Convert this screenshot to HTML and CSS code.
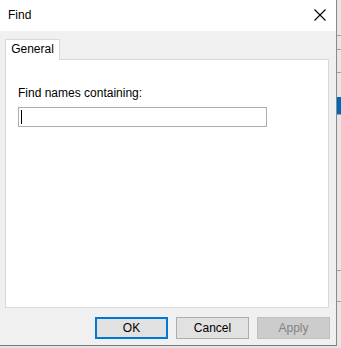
FILE: index.html
```html
<!DOCTYPE html>
<html>

<head>
  <title>Find</title>
  <link rel="stylesheet" href="styles.css">
</head>

<body>
  <div class="screen">
    <div class="dialog">
      <div class="titlebar">
        <span class="title">Find</span>
        <span class="close">
          <svg width="12" height="12" viewBox="0 0 12 12">
            <path d="M0.5 0.5 L11.5 11.5 M11.5 0.5 L0.5 11.5" stroke="#000" stroke-width="1.1" fill="none"/>
          </svg>
        </span>
      </div>
      <div class="body">
        <div class="tabs">
          <div class="tab">General</div>
        </div>
        <div class="panel">
          <label class="label">Find names containing:</label>
          <div class="field"><span class="caret"></span></div>
        </div>
        <div class="buttons">
          <button class="btn btn-default">OK</button>
          <button class="btn">Cancel</button>
          <button class="btn btn-disabled">Apply</button>
        </div>
      </div>
    </div>
    <div class="behind">
      <div class="rule r1"></div>
      <div class="rule r2"></div>
      <div class="rule r3"></div>
      <div class="band"></div>
      <div class="rule r4"></div>
      <div class="rule r5"></div>
      <div class="rule r6"></div>
    </div>
  </div>
</body>

</html>
```

FILE: styles.css
```css
body {
  margin: 0;
  font-family: "Liberation Sans", "Noto Sans", sans-serif;
  font-size: 12px;
  color: #000;
  background: #e3e3e3;
}

.screen {
  display: flex;
  width: 341px;
  height: 348px;
  overflow: hidden;
}

.dialog {
  width: 337px;
  height: 346px;
  flex: none;
  background: #f0f0f0;
  border-right: 1px solid #8a8a8a;
  border-bottom: 1px solid #7a7a7a;
  box-sizing: border-box;
  display: flex;
  flex-direction: column;
}

.titlebar {
  height: 31px;
  background: #fff;
  display: flex;
  align-items: center;
  justify-content: space-between;
  padding: 0 8px 0 8px;
}

.title {
  font-size: 12px;
  margin-top: -1px;
}

.close {
  display: flex;
  margin-right: 2px;
  margin-top: -1px;
}

.body {
  padding: 8px 6px 0 5px;
  display: flex;
  flex-direction: column;
}

.tabs {
  display: flex;
  height: 20px;
}

.tab {
  width: 55px;
  height: 21px;
  box-sizing: border-box;
  background: #fff;
  border: 1px solid #d9d9d9;
  border-bottom: none;
  text-align: center;
  line-height: 19px;
  position: relative;
  z-index: 1;
}

.panel {
  width: 324px;
  height: 249px;
  box-sizing: border-box;
  background: #fff;
  border: 1px solid #d9d9d9;
  padding: 25px 0 0 12px;
  display: flex;
  flex-direction: column;
}

.label {
  height: 16px;
  line-height: 16px;
}

.field {
  margin-top: 6px;
  width: 249px;
  height: 20px;
  box-sizing: border-box;
  border: 1px solid #adadad;
  background: #fff;
  padding: 2px 0 0 2px;
}

.caret {
  display: block;
  width: 1px;
  height: 14px;
  background: #000;
}

.buttons {
  display: flex;
  justify-content: flex-end;
  gap: 8px;
  margin-top: 9px;
}

.btn {
  width: 73px;
  height: 22px;
  box-sizing: border-box;
  background: #e1e1e1;
  border: 1px solid #adadad;
  font-family: inherit;
  font-size: 12px;
  color: #000;
  padding: 0;
  margin: 0;
}

.btn-default {
  border: 2px solid #0078d7;
}

.btn-disabled {
  background: #cccccc;
  border-color: #bfbfbf;
  color: #838383;
}

.behind {
  flex: 1;
  display: flex;
  flex-direction: column;
  background: #e6e6e6;
}

.rule {
  height: 1px;
  background: #a0a0a0;
}

.r1 { margin-top: 35px; }
.r2 { margin-top: 13px; }
.r3 { margin-top: 22px; }
.r4 { margin-top: 0; }
.r5 { margin-top: 155px; }
.r6 { margin-top: 30px; }

.band {
  margin-top: 24px;
  height: 17px;
  background: #0068b8;
}
```
